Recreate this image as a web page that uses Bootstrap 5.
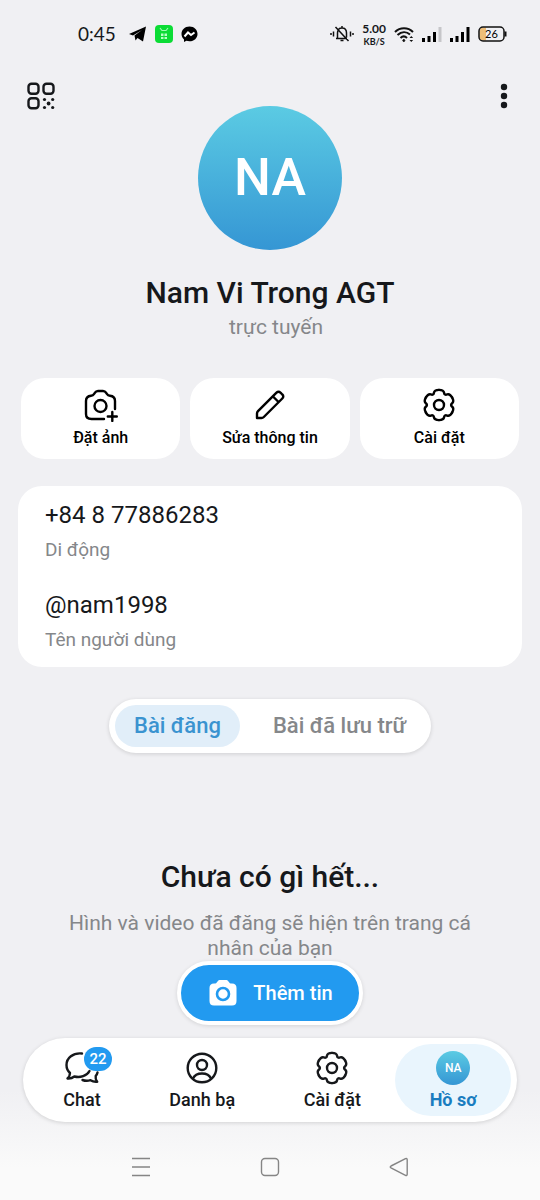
<!DOCTYPE html>
<html lang="vi">
<head>
<meta charset="utf-8">
<meta name="viewport" content="width=device-width, initial-scale=1">
<title>Hồ sơ</title>
<link href="https://cdn.jsdelivr.net/npm/bootstrap@5.3.0/dist/css/bootstrap.min.css" rel="stylesheet">
<style>
  body { font-family: Roboto, "Noto Sans", sans-serif; color: #16181b; background: #f0f0f3; }
  .screen { background: linear-gradient(to top, #fafafa 32px, #f0f0f3 110px); }
  svg { display: block; flex: none; }
  button { color: inherit; }
  .line-art { fill: none; stroke: currentColor; stroke-width: 2.4; stroke-linecap: round; stroke-linejoin: round; }

  .status-bar { height: 68px; padding: 0 32px 0 78px; }
  .clock { font-family: Lato, Roboto, sans-serif; font-size: 19px; margin-right: 13px; }
  .speed { font-family: Lato, Roboto, sans-serif; font-weight: 700; font-size: 12px; line-height: 14px; }
  .speed-unit { font-size: 9px; line-height: 11px; }

  .profile-top { display: grid; grid-template-columns: 1fr auto 1fr; align-items: start; padding: 14px 24px 0; }
  .icon-btn { background: none; border: 0; padding: 0; }
  .avatar { background: linear-gradient(#5bcbe3, #3596d4); color: #fff; font-weight: 500; border-radius: 50%; display: flex; align-items: center; justify-content: center; }
  .avatar-lg { width: 144px; height: 144px; font-size: 52px; margin-top: 24px; }
  .avatar-sm { width: 34px; height: 34px; font-size: 12px; }
  .heading { font-size: 30px; line-height: 36px; font-weight: 500; margin: 0; }
  .display-name { margin-top: 25px; }
  .muted { color: #85878a; }
  .presence { font-size: 21px; line-height: 24px; padding-left: 12px; }

  .actions { gap: 10px; padding: 0 21px; margin-top: 39px; }
  .action { flex: 1 1 0; background: #fff; border: 0; border-radius: 24px; padding: 10px 4px 9px; font-size: 16px; line-height: 24px; font-weight: 500; color: #000; gap: 4px; }
  .info { background: #fff; border-radius: 24px; margin: 27px 18px 0; padding: 14px 27px 15px; }
  .info dt { font-weight: 400; font-size: 24px; line-height: 30px; }
  .info dd { font-size: 19px; line-height: 24px; margin: 8px 0 28px; }
  .info dd:last-child { margin-bottom: 0; }

  .raised { background: #fff; box-shadow: 0 1px 4px rgba(0, 0, 0, .14); border-radius: 42px; }
  .switcher { margin-top: 32px; padding: 6px; gap: 14px; }
  .switcher button { border: 0; background: none; border-radius: 21px; padding: 0 19px; font-size: 22px; line-height: 42px; font-weight: 500; color: #85878a; }
  .switcher button.active { background: #e1eef9; color: #3a93d0; }

  .empty { margin-top: 106px; padding: 0 64px; }
  .empty p { font-size: 21px; line-height: 25px; margin: 16px 0 0; }
  .add-story { border: 4px solid #fff; border-radius: 32px; background: #229af0; color: #fff; height: 64px; padding: 0 26px; gap: 14px; font-size: 20px; font-weight: 500; box-shadow: 0 1px 4px rgba(0, 0, 0, .12); }

  .tabbar { margin: 13px 23px 0; padding: 6px; }
  .tabbar a { color: #16181b; text-decoration: none; font-size: 18px; line-height: 24px; font-weight: 500; border-radius: 36px; height: 72px; padding-top: 7px; gap: 3px; }
  .tabbar a.active { background: #e9f5fd; color: #1a7dc0; font-weight: 700; }
  .tab-icon { height: 34px; }
  .counter { position: absolute; left: 19px; top: -4px; background: #229af0; color: #fff; border-radius: 12px; font-size: 15px; line-height: 24px; padding: 0 5px; min-width: 28px; text-align: center; }
  .sys-nav { padding: 33px 76px 21px; color: #858585; }
</style>
</head>
<body>
<svg width="0" height="0" class="position-absolute" aria-hidden="true">
  <defs>
    <path id="tooth" d="M0-15.1Q4.600-15.100 5.050-12.300Q5.500-9.530 8.130-10.520Q10.780-11.560 13.090-7.560"/>
    <symbol id="gear" viewBox="-17 -17 34 34">
      <use href="#tooth"/><use href="#tooth" transform="rotate(60)"/><use href="#tooth" transform="rotate(120)"/>
      <use href="#tooth" transform="rotate(180)"/><use href="#tooth" transform="rotate(240)"/><use href="#tooth" transform="rotate(300)"/>
      <circle r="5"/>
    </symbol>
  </defs>
</svg>
<div class="screen min-vh-100 d-flex flex-column">

  <div class="status-bar d-flex align-items-center justify-content-between">
    <div class="d-flex align-items-center">
      <span class="clock">0:45</span>
      <svg class="me-2" width="18" height="16" viewBox="0 0 18 16"><path d="M0 8L17 .5 14 15.5 8.5 12 6.5 14.500 5.500 9.500 13 4 4 9.500z"/></svg>
      <svg class="me-2" width="18" height="18" viewBox="0 0 18 18"><rect width="18" height="18" rx="4" fill="#0bdc35"/><path d="M5 3l2 2.500h4L13 3" fill="none" stroke="#9dfbb0" stroke-width="1.200"/><path d="M6 8.500h2.500V11H6zM9.500 8.500H12V11H9.500zM6 12h2.500v2H6zM9.500 12H12v2H9.500z" fill="#b9ffc6"/></svg>
      <svg width="17" height="17" viewBox="0 0 17 17"><path d="M8.500.5C3.800.5.5 3.800.5 8c0 2.200.9 4.100 2.500 5.400V16l2.400-1.200c1 .3 2 .5 3.100.5 4.700 0 8-3.200 8-7.300S13.200.5 8.500.5z"/><path d="M3.500 10.500L7 6.500l3 2.500 3.500-2.500" fill="none" stroke="#fff" stroke-width="2"/></svg>
    </div>
    <div class="d-flex align-items-center">
      <svg class="me-2" width="24" height="18" viewBox="0 0 24 18" fill="none" stroke="#111" stroke-width="1.500"><path d="M6 13.500h11M7.500 13V8c0-3 1.500-5 4.500-5s4.500 2 4.500 5v4.500M10.500 15.500h3M5.500 2l13 14M12 1v2M3.500 6.500v5M1 8v2M20.500 6.500v5M23 8v2"/></svg>
      <div class="speed text-center me-2">5.00<div class="speed-unit">KB/S</div></div>
      <svg class="me-2" width="20" height="17" viewBox="0 0 20 17" fill="none" stroke="#111" stroke-width="2"><path d="M1 6c5-5 13-5 18 0M3.500 9c4-3.600 9-3.600 12.500-.5M6.500 12c2-2 4.500-2 6.500 0"/><circle cx="9.800" cy="14.500" r="1" fill="#111" stroke-width="1"/><path d="M15.500 12l1.800-2 1.800 2zM15.500 14l1.800 2 1.800-2z" fill="#111" stroke="none"/></svg>
      <svg class="me-2" width="20" height="15" viewBox="0 0 20 15"><path d="M0 11h3v4H0zM5.500 9h3v6h-3zM11 5h3v10h-3z"/><path d="M16.500 0h3v15h-3z" fill="#c6c6c9"/></svg>
      <svg class="me-2" width="20" height="15" viewBox="0 0 20 15"><path d="M0 11h3v4H0zM5.500 9h3v6h-3zM11 5h3v10h-3zM16.500 0h3v15h-3z"/></svg>
      <svg width="30" height="16" viewBox="0 0 30 16"><path d="M5 1.500h3v13H5a3.500 3.500 0 0 1-3.500-3.500V5A3.500 3.500 0 0 1 5 1.500z" fill="#edbd78"/><rect x="1" y="1" width="25" height="14" rx="4" fill="none" stroke="#111" stroke-width="1.500"/><path d="M27.500 5.500v5" stroke="#111" stroke-width="2"/><text x="13.500" y="12" text-anchor="middle" font-family="Lato, sans-serif" font-size="11">26</text></svg>
    </div>
  </div>

  <header class="text-center">
    <div class="profile-top">
      <button class="icon-btn" type="button" aria-label="Mã QR"><svg width="34" height="28" viewBox="0 0 34 28"><g fill="none" stroke="currentColor" stroke-width="2.400"><rect x="4.500" y="1.700" width="10" height="10" rx="3"/><rect x="19.500" y="1.700" width="10" height="10" rx="3"/><rect x="4.500" y="16.200" width="10" height="10" rx="3"/></g><g fill="currentColor"><circle cx="20.500" cy="17.500" r="1.600"/><circle cx="28.700" cy="17.500" r="1.600"/><circle cx="24.600" cy="21.500" r="1.900"/><circle cx="20.500" cy="25.500" r="1.600"/><circle cx="28.700" cy="25.500" r="1.600"/></g></svg></button>
      <div class="avatar avatar-lg">NA</div>
      <button class="icon-btn d-flex justify-content-end" type="button" aria-label="Thêm"><svg width="24" height="28" viewBox="0 0 24 28" fill="currentColor"><circle cx="12" cy="5" r="3.200"/><circle cx="12" cy="14" r="3.200"/><circle cx="12" cy="23" r="3.200"/></svg></button>
    </div>
    <h1 class="heading display-name">Nam Vi Trong AGT</h1>
    <div class="presence muted mt-1">trực tuyến</div>
  </header>

  <div class="actions d-flex">
    <button class="action d-flex flex-column align-items-center" type="button">
      <svg class="line-art" width="34" height="34" viewBox="0 0 34 34"><path d="M20 31H7.500C4 31 2 29.200 2 26V13c0-3.500 1.500-5 5-5.300 2.500-.2 2.500-1 3.700-2.700 1-1.500 1.800-2 3.300-2h5c1.500 0 2.300.5 3.300 2 1.200 1.700 1.200 2.500 3.700 2.700 3.500.3 5 1.800 5 5.300v8M28.300 24v9M23.800 28.500h9"/><circle cx="16.500" cy="18" r="6"/></svg>
      Đặt ảnh
    </button>
    <button class="action d-flex flex-column align-items-center" type="button">
      <svg class="line-art" width="34" height="34" viewBox="0 0 34 34"><path d="M4 30v-4.500c0-1 .3-1.600 1-2.300L23.500 4.700c1.300-1.300 2.800-1.300 4 0l1.800 1.800c1.300 1.200 1.300 2.700 0 4L10.800 29c-.7.700-1.300 1-2.300 1zM20 8.500l5.500 5.500"/></svg>
      Sửa thông tin
    </button>
    <button class="action d-flex flex-column align-items-center" type="button">
      <svg class="line-art" width="34" height="34" viewBox="0 0 34 34"><use href="#gear" width="34" height="34"/></svg>
      Cài đặt
    </button>
  </div>

  <dl class="info">
    <dt>+84 8 77886283</dt><dd class="muted">Di động</dd>
    <dt>@nam1998</dt><dd class="muted">Tên người dùng</dd>
  </dl>

  <div class="switcher raised d-flex align-self-center">
    <button class="active" type="button">Bài đăng</button>
    <button type="button">Bài đã lưu trữ</button>
  </div>

  <section class="empty text-center">
    <h2 class="heading">Chưa có gì hết...</h2>
    <p class="muted">Hình và video đã đăng sẽ hiện trên trang cá nhân của bạn</p>
  </section>
  <button class="add-story d-flex align-items-center align-self-center" type="button">
    <svg width="32" height="32" viewBox="0 0 32 32"><path d="M7 6.500c2 0 2.500-.5 3.300-1.800C11.200 3.400 12 3 13.500 3h5c1.500 0 2.300.4 3.200 1.700C22.500 6 23 6.500 25 6.500c3 .2 4.500 1.500 4.500 4.500v13c0 3-1.500 4.500-4.500 4.500H7c-3 0-4.500-1.500-4.500-4.500V11c0-3 1.500-4.500 4.500-4.500z" fill="#fff"/><circle cx="16" cy="17" r="6" fill="#fff" stroke="#229af0" stroke-width="2.600"/></svg>
    Thêm tin
  </button>

  <nav class="tabbar raised d-flex">
    <a href="#chat" class="flex-fill d-flex flex-column align-items-center">
      <span class="tab-icon position-relative"><svg class="line-art" width="34" height="34" viewBox="0 0 34 34"><path d="M17 2.500C8 1.500 1.500 7 1.500 14c0 3.300 1.300 6 3.500 8 0 2-.6 3.800-2.500 5.500 2.800.3 5-.5 6.800-2 6 1.500 12.500-.5 15.200-5.500M17.500 29c2.800 1 5.500 1 8 .2 2 1.300 4.300 1.800 6.700 1.500-1.500-1.800-1.900-3.500-1.500-5.700 1-1.200 1.500-2 1.800-3.500"/></svg><span class="counter">22</span></span>
      Chat
    </a>
    <a href="#contacts" class="flex-fill d-flex flex-column align-items-center">
      <svg class="line-art" width="34" height="34" viewBox="0 0 34 34"><circle cx="17" cy="17" r="14.300"/><circle cx="17" cy="14" r="5"/><path d="M8 27.500c1.500-3.500 5-5 9-5s7.500 1.500 9 5"/></svg>
      Danh bạ
    </a>
    <a href="#settings" class="flex-fill d-flex flex-column align-items-center">
      <svg class="line-art" width="34" height="34" viewBox="0 0 34 34"><use href="#gear" width="34" height="34"/></svg>
      Cài đặt
    </a>
    <a href="#profile" class="active flex-fill d-flex flex-column align-items-center">
      <span class="avatar avatar-sm">NA</span>
      Hồ sơ
    </a>
  </nav>

  <div class="sys-nav d-flex justify-content-around mt-auto">
    <button class="icon-btn" type="button" aria-label="Gần đây"><svg width="24" height="24" viewBox="0 0 24 24" fill="none" stroke="currentColor" stroke-width="1.400"><path d="M3 3.500h18M3 12h18M3 20.500h18"/></svg></button>
    <button class="icon-btn" type="button" aria-label="Trang chính"><svg width="24" height="24" viewBox="0 0 24 24" fill="none" stroke="currentColor" stroke-width="1.400"><rect x="3.500" y="3.500" width="17" height="17" rx="3.500"/></svg></button>
    <button class="icon-btn" type="button" aria-label="Quay lại"><svg width="24" height="24" viewBox="0 0 24 24" fill="none" stroke="currentColor" stroke-width="1.400"><path d="M4 11L18.500 3.700c1-.5 1.700 0 1.700 1v14.600c0 1-.7 1.500-1.700 1L4 13c-1-.6-1-1.400 0-2z"/></svg></button>
  </div>
</div>
<script src="https://cdn.jsdelivr.net/npm/bootstrap@5.3.0/dist/js/bootstrap.bundle.min.js"></script>
</body>
</html>
